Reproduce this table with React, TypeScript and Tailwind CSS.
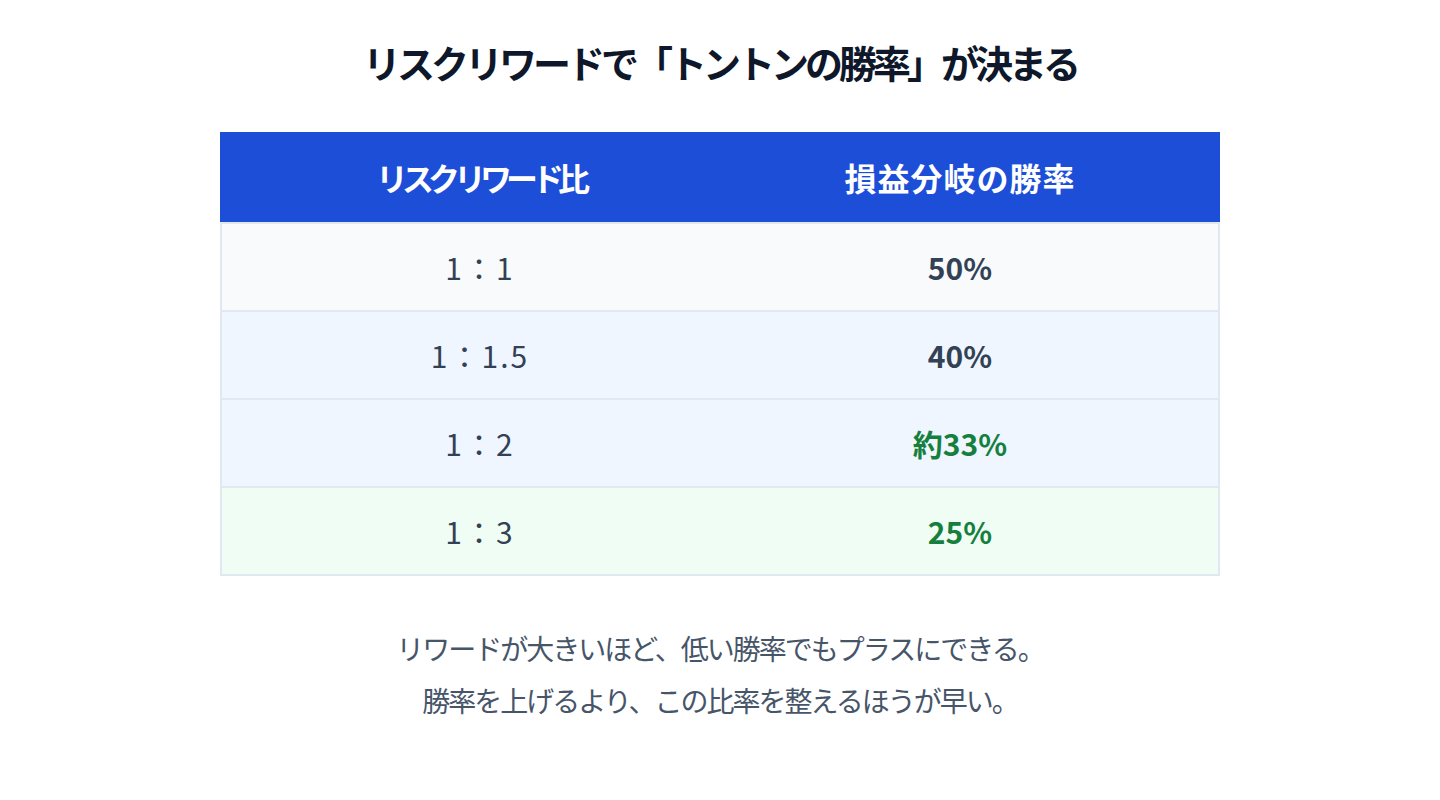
import React from 'react';

type Row = {
  ratio: string;
  rate: string;
  bg: string;
  good?: boolean;
};

const rows: Row[] = [
  { ratio: '1：1', rate: '50%', bg: 'bg-[#f8fafc]' },
  { ratio: '1：1.5', rate: '40%', bg: 'bg-[#eff6ff]' },
  { ratio: '1：2', rate: '約33%', bg: 'bg-[#eff6ff]', good: true },
  { ratio: '1：3', rate: '25%', bg: 'bg-[#f0fdf4]', good: true },
];

const App: React.FC = () => {
  return (
    <div
      className="min-h-screen bg-white flex flex-col items-center pt-[36px]"
      style={{ fontFamily: '"Noto Sans CJK JP", "Noto Sans", sans-serif' }}
    >
      <h1 className="text-[38px] leading-[52px] font-bold text-[#0f172a] tracking-[-4px]">
        リスクリワードで「トントンの勝率」が決まる
      </h1>

      {/* TABLE */}
      <div className="w-[1000px] mt-[44px]">
        <div className="grid grid-cols-2 px-[20px] h-[90px] bg-[#1d4ed8] text-white font-bold text-[32px]">
          <div className="flex items-center justify-center tracking-[-6px]">リスクリワード比</div>
          <div className="flex items-center justify-center tracking-[1px]">損益分岐の勝率</div>
        </div>
        <div className="border-x-2 border-b-2 border-[#e2e8f0]">
          {rows.map((r) => (
            <div
              key={r.ratio}
              className={`grid grid-cols-2 px-[18px] h-[88px] border-t-2 border-[#e2e8f0] text-[30px] ${r.bg}`}
            >
              <div className="flex items-center justify-center text-[#334155] tracking-[2px]">{r.ratio}</div>
              <div
                className={`flex items-center justify-center font-bold ${
                  r.good ? 'text-[#15803d]' : 'text-[#334155]'
                }`}
              >
                {r.rate}
              </div>
            </div>
          ))}
        </div>
      </div>

      <div className="mt-[46px] text-[28px] leading-[52px] text-[#475569] text-center tracking-[-2px]">
        <p>リワードが大きいほど、低い勝率でもプラスにできる。</p>
        <p>勝率を上げるより、この比率を整えるほうが早い。</p>
      </div>
    </div>
  );
};

export default App;
